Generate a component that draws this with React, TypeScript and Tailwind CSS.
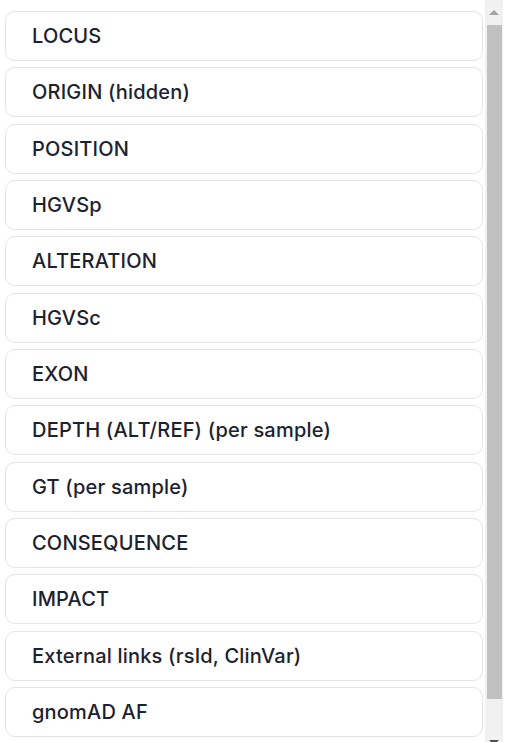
const columns = [
  "LOCUS",
  "ORIGIN (hidden)",
  "POSITION",
  "HGVSp",
  "ALTERATION",
  "HGVSc",
  "EXON",
  "DEPTH (ALT/REF) (per sample)",
  "GT (per sample)",
  "CONSEQUENCE",
  "IMPACT",
  "External links (rsId, ClinVar)",
  "gnomAD AF",
]

const App = () => {
  return (
    <div className="flex h-[742px] w-[507px] overflow-hidden bg-white font-['Inter',sans-serif]">
      {/* Column list */}
      <div className="flex w-[484px] flex-col gap-[6.33px] pl-[5px] pr-px pt-[11px]">
        {columns.map((label) => (
          <div
            key={label}
            className="flex h-[50px] shrink-0 items-center rounded-[10px] border border-[#e3e4ea] pl-[26px] text-[20px] font-medium tracking-[0.2px] text-[#1c2230]"
          >
            {label}
          </div>
        ))}
      </div>

      {/* Scrollbar */}
      <div className="ml-px flex h-[756px] w-[18px] shrink-0 flex-col items-center bg-[#f1f1f1]">
        <div className="flex h-[25px] w-full items-center justify-center">
          <div className="h-0 w-0 border-x-[5px] border-b-[5px] border-x-transparent border-b-[#a3a3a3]" />
        </div>
        <div className="h-[674px] w-[15px] bg-[#c1c1c1]" />
        <div className="mt-auto flex h-[16px] w-full items-start justify-center">
          <div className="h-0 w-0 border-x-[5px] border-t-[5px] border-x-transparent border-t-[#505050]" />
        </div>
      </div>
    </div>
  )
}

export default App
